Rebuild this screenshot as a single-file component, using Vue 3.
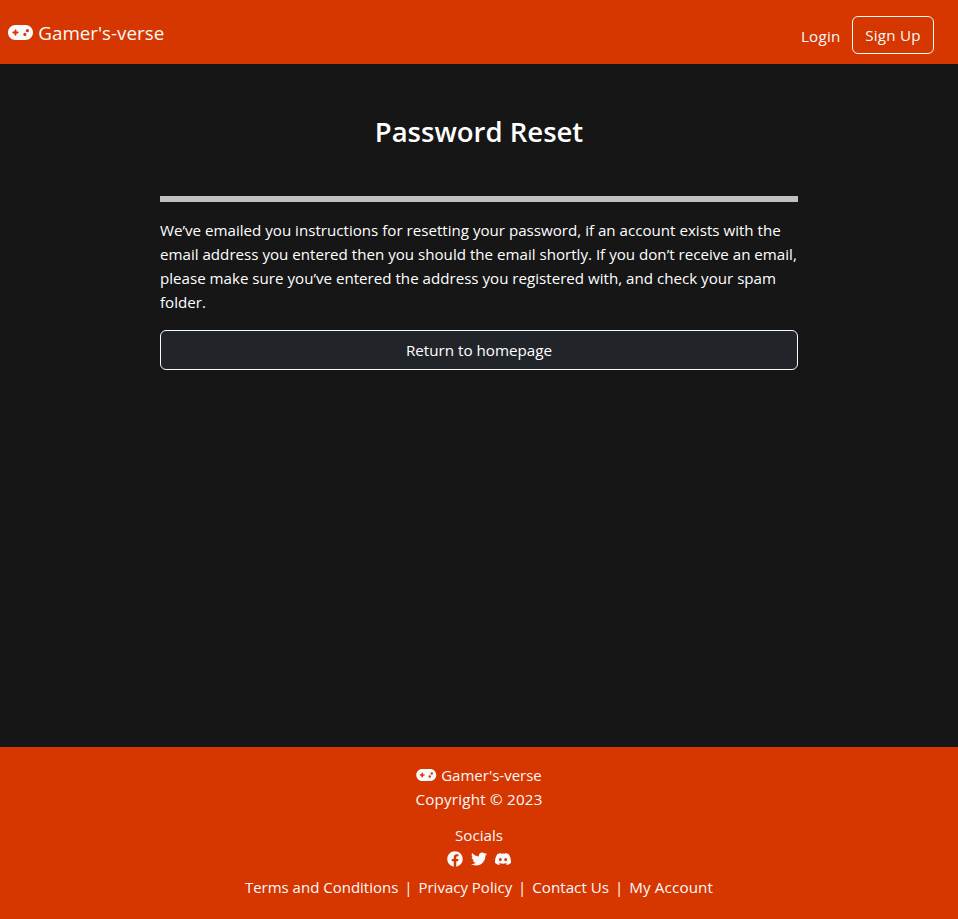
<script setup>
const gamepad =
  'M192 64C86 64 0 150 0 256S86 448 192 448H448c106 0 192-86 192-192s-86-192-192-192H192zM496 168a40 40 0 1 1 0 80 40 40 0 1 1 0-80zM392 304a40 40 0 1 1 80 0 40 40 0 1 1 -80 0zM168 200c0-13.3 10.7-24 24-24s24 10.7 24 24v32h32c13.3 0 24 10.7 24 24s-10.7 24-24 24H216v32c0 13.3-10.7 24-24 24s-24-10.7-24-24V280H136c-13.3 0-24-10.7-24-24s10.7-24 24-24h32V200z'

const socials = [
  {
    name: 'Facebook',
    box: '0 0 512 512',
    path: 'M504 256C504 119 393 8 256 8S8 119 8 256c0 123.78 90.69 226.38 209.25 245V327.69h-63V256h63v-54.64c0-62.15 37-96.48 93.67-96.48 27.14 0 55.52 4.84 55.52 4.84v61h-31.28c-30.8 0-40.41 19.12-40.41 38.73V256h68.78l-11 71.69h-57.78V501C413.31 482.38 504 379.78 504 256z',
  },
  {
    name: 'Twitter',
    box: '0 0 512 512',
    path: 'M459.37 151.716c.325 4.548.325 9.097.325 13.645 0 138.72-105.583 298.558-298.558 298.558-59.452 0-114.68-17.219-161.137-47.106 8.447.974 16.568 1.299 25.34 1.299 49.055 0 94.213-16.568 130.274-44.832-46.132-.975-84.792-31.188-98.112-72.772 6.498.974 12.995 1.624 19.818 1.624 9.421 0 18.843-1.3 27.614-3.573-48.081-9.747-84.143-51.98-84.143-102.985v-1.299c13.969 7.797 30.214 12.67 47.431 13.319-28.264-18.843-46.781-51.005-46.781-87.391 0-19.492 5.197-37.36 14.294-52.954 51.655 63.675 129.3 105.258 216.365 109.807-1.624-7.797-2.599-15.918-2.599-24.04 0-57.828 46.782-104.934 104.934-104.934 30.213 0 57.502 12.67 76.67 33.137 23.715-4.548 46.456-13.32 66.599-25.34-7.798 24.366-24.366 44.833-46.132 57.827 21.117-2.273 41.584-8.122 60.426-16.243-14.292 20.791-32.161 39.308-52.628 54.253z',
  },
  {
    name: 'Discord',
    box: '0 0 16 16',
    path: 'M13.545 2.907a13.227 13.227 0 0 0-3.257-1.011.05.05 0 0 0-.052.025c-.141.25-.297.577-.406.833a12.19 12.19 0 0 0-3.658 0 8.258 8.258 0 0 0-.412-.833.051.051 0 0 0-.052-.025c-1.125.194-2.22.534-3.257 1.011a.041.041 0 0 0-.021.018C.356 6.024-.213 9.047.066 12.032c.001.014.01.028.021.037a13.276 13.276 0 0 0 3.995 2.02.05.05 0 0 0 .056-.019c.308-.42.582-.863.818-1.329a.05.05 0 0 0-.01-.059.051.051 0 0 0-.018-.011 8.875 8.875 0 0 1-1.248-.595.05.05 0 0 1-.02-.066.051.051 0 0 1 .015-.019c.084-.063.168-.129.248-.195a.05.05 0 0 1 .051-.007c2.619 1.196 5.454 1.196 8.041 0a.052.052 0 0 1 .053.007c.08.066.164.132.248.195a.051.051 0 0 1-.004.085 8.254 8.254 0 0 1-1.249.594.05.05 0 0 0-.03.03.052.052 0 0 0 .003.041c.24.465.515.909.817 1.329a.05.05 0 0 0 .056.019 13.235 13.235 0 0 0 4.001-2.02.049.049 0 0 0 .021-.037c.334-3.451-.559-6.449-2.366-9.106a.034.034 0 0 0-.02-.019Zm-8.198 7.307c-.789 0-1.438-.724-1.438-1.612 0-.889.637-1.613 1.438-1.613.807 0 1.45.73 1.438 1.613 0 .888-.637 1.612-1.438 1.612Zm5.316 0c-.788 0-1.438-.724-1.438-1.612 0-.889.637-1.613 1.438-1.613.807 0 1.451.73 1.438 1.613 0 .888-.631 1.612-1.438 1.612Z',
  },
]

const lines = [
  'We’ve emailed you instructions for resetting your password, if an account exists with the',
  'email address you entered then you should the email shortly. If you don’t receive an email,',
  'please make sure you’ve entered the address you registered with, and check your spam',
  'folder.',
]

const links = ['Terms and Conditions', 'Privacy Policy', 'Contact Us', 'My Account']
</script>

<template>
  <div class="page">
    <header class="navbar">
      <a class="brand">
        <svg class="brand-icon" viewBox="0 64 640 384"><path :d="gamepad" /></svg>
        <span>Gamer's-verse</span>
      </a>
      <nav class="nav">
        <a class="login">Login</a>
        <a class="signup">Sign Up</a>
      </nav>
    </header>

    <main class="content">
      <h1 class="title">Password Reset</h1>
      <hr class="rule" />
      <p class="message">
        <span v-for="line in lines" :key="line" class="line">{{ line }}</span>
      </p>
      <a class="home">Return to homepage</a>
    </main>

    <footer class="footer">
      <div class="foot-brand">
        <svg class="foot-icon" viewBox="0 64 640 384"><path :d="gamepad" /></svg>
        <span>Gamer's-verse</span>
      </div>
      <div class="copyright">Copyright © 2023</div>
      <div class="socials-title">Socials</div>
      <div class="socials">
        <svg v-for="s in socials" :key="s.name" class="social" :viewBox="s.box"><path :d="s.path" /></svg>
      </div>
      <div class="links">
        <template v-for="(l, i) in links" :key="l">
          <span v-if="i" class="sep">|</span>
          <a class="link">{{ l }}</a>
        </template>
      </div>
    </footer>
  </div>
</template>

<style>
body {
  margin: 0;
  background: #161616;
}
</style>

<style scoped>
.page {
  box-sizing: border-box;
  height: 919px;
  display: flex;
  flex-direction: column;
  font-family: 'Open Sans', sans-serif;
  font-size: 15px;
  line-height: 24px;
  color: #fff;
  background: #161616;
  overflow: hidden;
  white-space: nowrap;
}
svg {
  display: block;
  fill: #f8f9fa;
  flex: none;
}
.navbar {
  box-sizing: border-box;
  height: 64px;
  display: flex;
  justify-content: space-between;
  align-items: flex-start;
  padding: 16px 24px 0 8px;
  background: #d63600;
  color: #f8f9fa;
}
.brand {
  display: flex;
  align-items: center;
  gap: 5.3px;
  height: 34px;
  font-size: 18.8px;
}
.brand-icon {
  width: 25px;
  height: 15px;
  margin-bottom: 1px;
}
.nav {
  display: flex;
  align-items: flex-start;
  gap: 11.5px;
  font-size: 15.2px;
  letter-spacing: 0.23px;
}
.login {
  padding-top: 8px;
}
.signup {
  box-sizing: border-box;
  width: 82px;
  height: 38px;
  padding-top: 6px;
  border: 1px solid #f8f9fa;
  border-radius: 6px;
  text-align: center;
}
.content {
  width: 638px;
  margin: 0 auto;
  flex: 1;
}
.title {
  margin: 49px 0 0;
  font-size: 27.5px;
  font-weight: 600;
  line-height: 38px;
  text-align: center;
}
.rule {
  height: 6px;
  margin: 45px 0 16px;
  border: 0;
  background: #c0c0c0;
}
.message {
  margin: 0 0 16px;
  font-size: 15.13px;
}
.line {
  display: block;
}
.home {
  box-sizing: border-box;
  display: block;
  height: 40px;
  padding-top: 7px;
  border: 1px solid #f8f9fa;
  border-radius: 6px;
  background: #212529;
  font-size: 15.2px;
  text-align: center;
}
.footer {
  box-sizing: border-box;
  height: 172px;
  padding-top: 16px;
  display: flex;
  flex-direction: column;
  align-items: center;
  background: #d63600;
  color: #f8f9fa;
}
.foot-brand {
  display: flex;
  align-items: center;
  gap: 4.5px;
  height: 24px;
}
.foot-icon {
  width: 20.5px;
  height: 12px;
}
.copyright {
  font-size: 15.2px;
  letter-spacing: 0.2px;
}
.socials-title {
  margin-top: 12px;
  font-size: 15.2px;
}
.socials {
  display: flex;
  align-items: center;
  gap: 8px;
  height: 24px;
}
.social {
  width: 16px;
  height: 16px;
}
.links {
  display: flex;
  margin-top: 4px;
}
.link:nth-of-type(3) {
  font-size: 15.2px;
}
.link:nth-of-type(4) {
  font-size: 15.2px;
  letter-spacing: 0.14px;
}
.sep {
  width: 20.1px;
  color: #fff;
  text-align: center;
}
</style>
